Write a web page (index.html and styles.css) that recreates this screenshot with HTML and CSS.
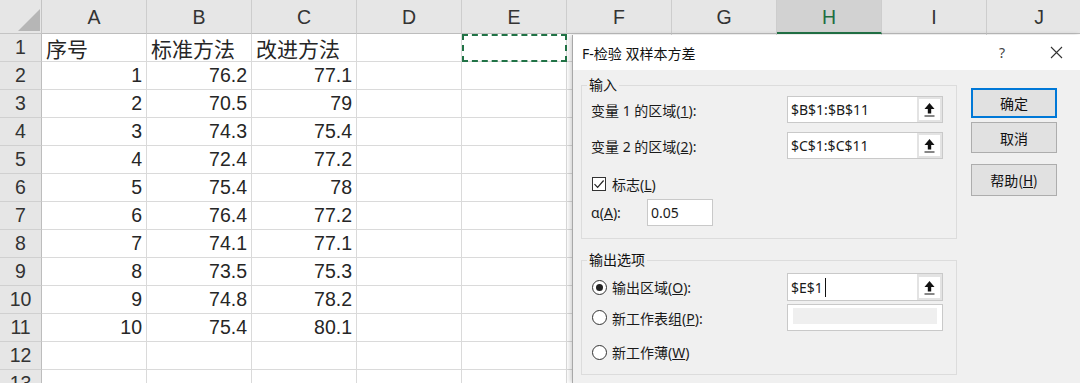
FILE: index.html
```html
<!DOCTYPE html>
<html lang="zh-CN">
<head>
    <meta charset="UTF-8">
    <meta name="viewport" content="width=device-width, initial-scale=1.0">
    <title>F-检验 双样本方差</title>
    <link rel="stylesheet" href="styles.css">
</head>
<body>
    <div class="sheet">
        <!-- header row -->
        <div class="cell corner"><svg width="24" height="24" viewBox="0 0 24 24"><polygon points="23,0 23,22 1,22" fill="#b6b6b6"/></svg></div>
        <div class="cell colhead">A</div>
        <div class="cell colhead">B</div>
        <div class="cell colhead">C</div>
        <div class="cell colhead">D</div>
        <div class="cell colhead">E</div>
        <div class="cell colhead">F</div>
        <div class="cell colhead">G</div>
        <div class="cell colhead active">H</div>
        <div class="cell colhead">I</div>
        <div class="cell colhead">J</div>

        <div class="cell rowhead">1</div>
        <div class="cell text">序号</div>
        <div class="cell text">标准方法</div>
        <div class="cell text">改进方法</div>
        <div class="cell"></div>
        <div class="cell copy"></div>
        <div class="cell"></div><div class="cell"></div><div class="cell"></div><div class="cell"></div><div class="cell"></div>

        <div class="cell rowhead">2</div>
        <div class="cell">1</div><div class="cell">76.2</div><div class="cell">77.1</div>
        <div class="cell"></div><div class="cell"></div><div class="cell"></div><div class="cell"></div><div class="cell"></div><div class="cell"></div><div class="cell"></div>

        <div class="cell rowhead">3</div>
        <div class="cell">2</div><div class="cell">70.5</div><div class="cell">79</div>
        <div class="cell"></div><div class="cell"></div><div class="cell"></div><div class="cell"></div><div class="cell"></div><div class="cell"></div><div class="cell"></div>

        <div class="cell rowhead">4</div>
        <div class="cell">3</div><div class="cell">74.3</div><div class="cell">75.4</div>
        <div class="cell"></div><div class="cell"></div><div class="cell"></div><div class="cell"></div><div class="cell"></div><div class="cell"></div><div class="cell"></div>

        <div class="cell rowhead">5</div>
        <div class="cell">4</div><div class="cell">72.4</div><div class="cell">77.2</div>
        <div class="cell"></div><div class="cell"></div><div class="cell"></div><div class="cell"></div><div class="cell"></div><div class="cell"></div><div class="cell"></div>

        <div class="cell rowhead">6</div>
        <div class="cell">5</div><div class="cell">75.4</div><div class="cell">78</div>
        <div class="cell"></div><div class="cell"></div><div class="cell"></div><div class="cell"></div><div class="cell"></div><div class="cell"></div><div class="cell"></div>

        <div class="cell rowhead">7</div>
        <div class="cell">6</div><div class="cell">76.4</div><div class="cell">77.2</div>
        <div class="cell"></div><div class="cell"></div><div class="cell"></div><div class="cell"></div><div class="cell"></div><div class="cell"></div><div class="cell"></div>

        <div class="cell rowhead">8</div>
        <div class="cell">7</div><div class="cell">74.1</div><div class="cell">77.1</div>
        <div class="cell"></div><div class="cell"></div><div class="cell"></div><div class="cell"></div><div class="cell"></div><div class="cell"></div><div class="cell"></div>

        <div class="cell rowhead">9</div>
        <div class="cell">8</div><div class="cell">73.5</div><div class="cell">75.3</div>
        <div class="cell"></div><div class="cell"></div><div class="cell"></div><div class="cell"></div><div class="cell"></div><div class="cell"></div><div class="cell"></div>

        <div class="cell rowhead">10</div>
        <div class="cell">9</div><div class="cell">74.8</div><div class="cell">78.2</div>
        <div class="cell"></div><div class="cell"></div><div class="cell"></div><div class="cell"></div><div class="cell"></div><div class="cell"></div><div class="cell"></div>

        <div class="cell rowhead">11</div>
        <div class="cell">10</div><div class="cell">75.4</div><div class="cell">80.1</div>
        <div class="cell"></div><div class="cell"></div><div class="cell"></div><div class="cell"></div><div class="cell"></div><div class="cell"></div><div class="cell"></div>

        <div class="cell rowhead">12</div>
        <div class="cell"></div><div class="cell"></div><div class="cell"></div>
        <div class="cell"></div><div class="cell"></div><div class="cell"></div><div class="cell"></div><div class="cell"></div><div class="cell"></div><div class="cell"></div>

        <div class="cell rowhead">13</div>
        <div class="cell"></div><div class="cell"></div><div class="cell"></div>
        <div class="cell"></div><div class="cell"></div><div class="cell"></div><div class="cell"></div><div class="cell"></div><div class="cell"></div><div class="cell"></div>
    </div>

    <!-- dialog F-test -->
    <div class="dialog">
        <div class="titlebar">
            <span class="title">F-检验 双样本方差</span>
            <span class="help">?</span>
            <svg class="close" width="13" height="13" viewBox="0 0 13 13"><path d="M1 1 L12 12 M12 1 L1 12" stroke="#333" stroke-width="1.1" fill="none"/></svg>
        </div>
        <div class="dialog-body">
            <div class="groups">
                <fieldset class="group group-in">
                    <legend>输入</legend>
                    <div class="row range-row">
                        <span class="label">变量 1 的区域(<u>1</u>):</span>
                        <div class="refbox">
                            <span class="reftext">$B$1:$B$11</span>
                            <span class="refbtn"><svg width="12" height="16" viewBox="0 0 12 16"><polygon points="6,1 11,7 1,7" fill="#111"/><rect x="4.3" y="6.5" width="3.4" height="5" fill="#111"/><rect x="1" y="13.5" width="10" height="1" fill="#111"/></svg></span>
                        </div>
                    </div>
                    <div class="row range-row second">
                        <span class="label">变量 2 的区域(<u>2</u>):</span>
                        <div class="refbox">
                            <span class="reftext">$C$1:$C$11</span>
                            <span class="refbtn"><svg width="12" height="16" viewBox="0 0 12 16"><polygon points="6,1 11,7 1,7" fill="#111"/><rect x="4.3" y="6.5" width="3.4" height="5" fill="#111"/><rect x="1" y="13.5" width="10" height="1" fill="#111"/></svg></span>
                        </div>
                    </div>
                    <div class="row check-row">
                        <span class="checkbox"><svg width="12" height="12" viewBox="0 0 12 12"><path d="M1.5 6.2 L4.6 9.3 L10.6 2.5" stroke="#222" stroke-width="1.2" fill="none"/></svg></span>
                        <span>标志(<u>L</u>)</span>
                    </div>
                    <div class="row alpha-row">
                        <span class="label alpha-label">α(<u>A</u>):</span>
                        <div class="smallbox">0.05</div>
                    </div>
                </fieldset>

                <fieldset class="group group-out">
                    <legend>输出选项</legend>
                    <div class="row out-row">
                        <span class="radio checked"></span>
                        <span class="label">输出区域(<u>O</u>):</span>
                        <div class="refbox">
                            <span class="reftext">$E$1<span class="caret"></span></span>
                            <span class="refbtn"><svg width="12" height="16" viewBox="0 0 12 16"><polygon points="6,1 11,7 1,7" fill="#111"/><rect x="4.3" y="6.5" width="3.4" height="5" fill="#111"/><rect x="1" y="13.5" width="10" height="1" fill="#111"/></svg></span>
                        </div>
                    </div>
                    <div class="row out-row second">
                        <span class="radio"></span>
                        <span class="label">新工作表组(<u>P</u>):</span>
                        <div class="refbox disabled"><span class="fill"></span></div>
                    </div>
                    <div class="row out-row third">
                        <span class="radio"></span>
                        <span class="label">新工作薄(<u>W</u>)</span>
                    </div>
                </fieldset>
            </div>

            <div class="buttons">
                <button class="btn default">确定</button>
                <button class="btn">取消</button>
                <button class="btn help-btn">帮助(<u>H</u>)</button>
            </div>
        </div>
    </div>
</body>
</html>
```

FILE: styles.css
```css
* {
    box-sizing: border-box;
}

body {
    margin: 0;
    width: 1080px;
    height: 383px;
    overflow: hidden;
    position: relative;
    background-color: #fff;
    font-family: "Liberation Sans", "Noto Sans CJK SC", sans-serif;
}

/* Spreadsheet */
.sheet {
    display: grid;
    grid-template-columns: 42px repeat(10, 105px);
    grid-template-rows: 34px repeat(13, 28px);
}

.cell {
    display: flex;
    align-items: center;
    justify-content: flex-end;
    padding: 0 4px;
    border-right: 1px solid #dadada;
    border-bottom: 1px solid #dadada;
    font-size: 19.5px;
    color: #262626;
    white-space: nowrap;
    overflow: hidden;
}

.cell.text {
    justify-content: flex-start;
    font-size: 21px;
    font-family: "Noto Sans CJK SC", sans-serif;
}

.corner {
    background-color: #e6e6e6;
    border-right: 1px solid #c4c4c4;
    border-bottom: 1px solid #c4c4c4;
    padding: 0;
    align-items: flex-end;
    justify-content: flex-end;
}

.colhead {
    justify-content: center;
    background-color: #e6e6e6;
    color: #333;
    border-right: 1px solid #cdcdcd;
    border-bottom: 1px solid #bdbdbd;
    padding-top: 2px;
}

.colhead.active {
    background-color: #d2d2d2;
    color: #1e6e42;
    border-bottom: 2px solid #217346;
}

.rowhead {
    justify-content: center;
    background-color: #e6e6e6;
    color: #333;
    border-right: 1px solid #bdbdbd;
    border-bottom: 1px solid #d0d0d0;
    padding: 0;
}

.copy {
    outline: 2px dashed #217346;
    outline-offset: -2px;
}

/* Dialog */
.dialog {
    position: absolute;
    left: 572px;
    top: 35px;
    right: 0;
    bottom: 0;
    background-color: #f0f0f0;
    border-left: 1px solid #a8a8a8;
    box-shadow: -2px 0 5px rgba(0, 0, 0, 0.18);
    font-family: "Noto Sans", "Noto Sans CJK SC", sans-serif;
    font-size: 14px;
    color: #1a1a1a;
    overflow: hidden;
}

.titlebar {
    height: 35px;
    background-color: #fff;
    display: flex;
    align-items: center;
    padding-left: 9px;
}

.title {
    flex: 1;
    color: #111;
}

.help {
    width: 12px;
    margin-right: 39px;
    color: #444;
    font-size: 14px;
}

.close {
    margin-right: 17px;
}

.dialog-body {
    display: flex;
    gap: 14px;
    padding: 5px 0 0 8px;
}

.groups {
    width: 376px;
}

.group {
    margin: 0;
    border: 1px solid #dcdcdc;
    padding: 1px 13px 12px 9px;
}

.group legend {
    padding: 0 2px;
    margin-left: -4px;
    line-height: 20px;
    color: #111;
}

.group-out {
    margin-top: 11px;
    padding-top: 3px;
    padding-bottom: 10px;
}

.row {
    display: flex;
    align-items: center;
}

.range-row {
    height: 27px;
}

.range-row.second {
    margin-top: 9px;
}

.check-row {
    height: 24px;
    margin-top: 13px;
    padding-left: 1px;
}

.alpha-row {
    height: 27px;
    margin-top: 3px;
}

.label {
    white-space: nowrap;
}

.alpha-label {
    width: 56px;
}

.smallbox {
    width: 66px;
    height: 100%;
    display: flex;
    align-items: center;
    padding-left: 3px;
    border: 1px solid #c9c9c9;
    background-color: #fff;
}

.refbox {
    margin-left: auto;
    width: 156px;
    height: 100%;
    display: flex;
    align-items: center;
    border: 1px solid #c9c9c9;
    background-color: #fff;
}

.reftext {
    flex: 1;
    padding-left: 3px;
    display: flex;
    align-items: center;
}

.caret {
    display: inline-block;
    width: 1px;
    height: 19px;
    margin-left: 2px;
    background-color: #111;
}

.refbtn {
    width: 25px;
    height: 100%;
    background-color: #e3e3e3;
    display: flex;
    align-items: center;
    justify-content: center;
    padding: 2px;
}

.refbtn svg {
    background-color: #fff;
    width: 21px;
    height: 21px;
    padding: 3px 4px 2px;
}

.refbox.disabled {
    padding: 3px 5px 6px 5px;
}

.refbox.disabled .fill {
    display: block;
    width: 100%;
    height: 100%;
    background-color: #efefef;
}

.checkbox {
    width: 14px;
    height: 14px;
    border: 1px solid #333;
    background-color: #fff;
    display: flex;
    align-items: center;
    justify-content: center;
    margin-right: 6px;
}

.out-row {
    height: 28px;
}

.out-row.second {
    height: 27px;
    margin-top: 3px;
}

.out-row.third {
    height: 24px;
    margin-top: 9px;
}

.radio {
    width: 15px;
    height: 15px;
    border: 1px solid #333;
    border-radius: 50%;
    background-color: #fff;
    margin-left: 1px;
    margin-right: 5px;
    display: flex;
    align-items: center;
    justify-content: center;
}

.radio.checked::after {
    content: "";
    width: 7px;
    height: 7px;
    border-radius: 50%;
    background-color: #222;
}

/* Buttons */
.buttons {
    display: flex;
    flex-direction: column;
    padding-top: 13px;
}

.btn {
    width: 86px;
    height: 31px;
    margin-bottom: 4px;
    background-color: #e1e1e1;
    border: 1px solid #adadad;
    font-family: "Noto Sans CJK SC", sans-serif;
    font-size: 14px;
    color: #111;
    padding: 0;
}

.btn.default {
    border: 2px solid #0078d7;
    height: 30px;
}

.btn.help-btn {
    margin-top: 7px;
    height: 32px;
}
```
